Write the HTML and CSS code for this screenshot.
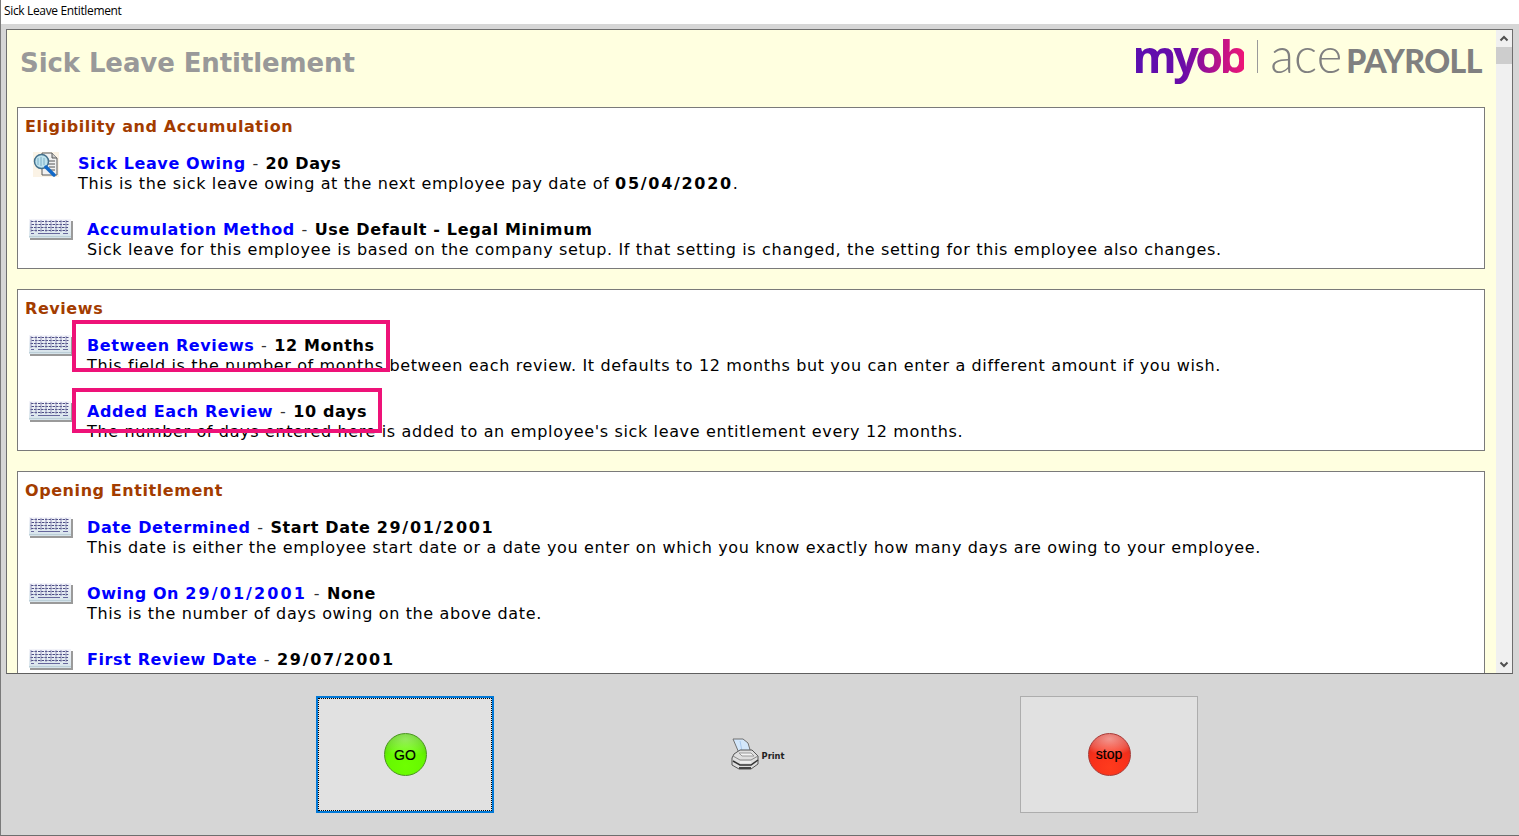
FILE: index.html
```html
<!DOCTYPE html>
<html lang="en">
<head>
<meta charset="utf-8">
<title>Sick Leave Entitlement</title>
<link rel="stylesheet" href="styles.css">
</head>
<body>
<svg class="defs" width="0" height="0" aria-hidden="true">
  <defs>
    <linearGradient id="kbBody" x1="0" y1="0" x2="0" y2="1">
      <stop offset="0" stop-color="#f4f4fa"/><stop offset="1" stop-color="#d5e3ea"/>
    </linearGradient>
    <symbol id="kb" viewBox="0 0 45 22">
      <path d="M2 3h43v19H2z" fill="#9a9a9a"/>
      <path d="M1 1h42v19H1z" fill="url(#kbBody)"/>
      <path d="M3 3.500h38M3.500 6.500h37M2.500 9.500h38M3 12.500h37" stroke="#4c4c84" stroke-width="1" stroke-dasharray="2.500 1" fill="none"/>
      <path d="M3 2v12M8 2v12M13 2v12M18 2v12M23 2v12M28 2v12M33 2v12M38 2v12" stroke="#7f7fab" stroke-width=".8" fill="none"/>
      <path d="M3 15.500h3M10 15.500h22M35 15.500h5" stroke="#66669c" stroke-width="1" fill="none"/>
      <path d="M1 18.500h42" stroke="#bccfd8" fill="none"/>
    </symbol>
  </defs>
</svg>
<div class="window">
  <header class="titlebar">Sick Leave Entitlement</header>
  <div class="stage">
    <div class="frame">
      <div class="main">
        <div class="pagehead">
          <h1 class="pagetitle">Sick Leave Entitlement</h1>
          <div class="logo">
            <span class="logo-myob">myob</span>
            <span class="logo-rule"></span>
            <span class="logo-ace">ace</span>
            <span class="logo-payroll">PAYROLL</span>
          </div>
        </div>
        <div class="scroller">
        <section class="panel">
          <h2 class="panel-title">Eligibility and Accumulation</h2>
          <div class="row row-doc">
            <svg class="icon-doc" viewBox="0 0 26 25" width="26" height="25">
              <rect width="26" height="25" fill="#fbf3e6"/>
              <path d="M9 1h10l5 5v17H9z" fill="#f1f1f1" stroke="#5a5a5a"/>
              <path d="M19 1v5h5" fill="#ccc" stroke="#5a5a5a"/>
              <path d="M14 9h8M15 12h7M16 15h6M17 18h5" stroke="#555"/>
              <circle cx="8.500" cy="9.500" r="7" fill="#bfe3ee" stroke="#44708c" stroke-width="1.500"/>
              <path d="M5 6v7M8 5v9M11 6v7" stroke="#7fb0c8"/>
              <path d="M13 15l8 8" stroke="#1168c8" stroke-width="3.500" stroke-linecap="round"/>
            </svg>
            <div class="row-text">
              <div class="row-head"><a class="link">Sick Leave Owing</a><span class="dash"> - </span><b class="value">20 Days</b></div>
              <div class="row-desc">This is the sick leave owing at the next employee pay date of <b class="value date">05/04/2020</b>.</div>
            </div>
          </div>
          <div class="row">
            <svg class="icon-kb"><use href="#kb"/></svg>
            <div class="row-text">
              <div class="row-head"><a class="link">Accumulation Method</a><span class="dash"> - </span><b class="value">Use Default - Legal Minimum</b></div>
              <div class="row-desc">Sick leave for this employee is based on the company setup. If that setting is changed, the setting for this employee also changes.</div>
            </div>
          </div>
        </section>

        <section class="panel">
          <h2 class="panel-title">Reviews</h2>
          <div class="row">
            <svg class="icon-kb"><use href="#kb"/></svg>
            <div class="row-text">
              <div class="row-head"><a class="link">Between Reviews</a><span class="dash"> - </span><b class="value">12 Months</b></div>
              <div class="row-desc">This field is the number of months between each review. It defaults to 12 months but you can enter a different amount if you wish.</div>
            </div>
            <span class="mark mark-a"></span>
          </div>
          <div class="row">
            <svg class="icon-kb"><use href="#kb"/></svg>
            <div class="row-text">
              <div class="row-head"><a class="link">Added Each Review</a><span class="dash"> - </span><b class="value">10 days</b></div>
              <div class="row-desc">The number of days entered here is added to an employee's sick leave entitlement every 12 months.</div>
            </div>
            <span class="mark mark-b"></span>
          </div>
        </section>

        <section class="panel">
          <h2 class="panel-title">Opening Entitlement</h2>
          <div class="row">
            <svg class="icon-kb"><use href="#kb"/></svg>
            <div class="row-text">
              <div class="row-head"><a class="link">Date Determined</a><span class="dash"> - </span><b class="value">Start Date <span class="date">29/01/2001</span></b></div>
              <div class="row-desc">This date is either the employee start date or a date you enter on which you know exactly how many days are owing to your employee.</div>
            </div>
          </div>
          <div class="row">
            <svg class="icon-kb"><use href="#kb"/></svg>
            <div class="row-text">
              <div class="row-head"><a class="link">Owing On <span class="date wide">29/01/2001</span></a><span class="dash"> - </span><b class="value">None</b></div>
              <div class="row-desc">This is the number of days owing on the above date.</div>
            </div>
          </div>
          <div class="row">
            <svg class="icon-kb"><use href="#kb"/></svg>
            <div class="row-text">
              <div class="row-head"><a class="link">First Review Date</a><span class="dash"> - </span><b class="value date">29/07/2001</b></div>
              <div class="row-desc">This field is the date on which the next review occurs. It is set from the start date of the employee but you can change it if you wish to.</div>
            </div>
          </div>
        </section>
        </div>
      </div>
      <div class="scrollbar">
        <svg class="arrow" viewBox="0 0 16 17" width="16" height="17"><path d="M4.500 10.500L8 7l3.500 3.500" fill="none" stroke="#505050" stroke-width="2"/></svg>
        <div class="thumb"></div>
        <div class="track"></div>
        <svg class="arrow" viewBox="0 0 16 17" width="16" height="17"><path d="M4.500 6.500L8 10l3.500-3.500" fill="none" stroke="#505050" stroke-width="2"/></svg>
      </div>
    </div>
    <footer class="actions">
      <button class="action action-go" type="button"><span class="inner"><span class="orb orb-go">GO</span></span></button>
      <div class="action action-print">
        <svg class="printer" viewBox="0 0 30 33" width="30" height="33">
          <path d="M3 1h10l5 4 3 10H9z" fill="#d3e7fb" stroke="#707070"/>
          <path d="M10 3l2 10" stroke="#a9c9ee"/>
          <path d="M4 16l6-4h12l6 6v8l-7 5H9l-7-4v-7z" fill="#dedede" stroke="#555"/>
          <path d="M3 18l7 4h11l7-4" fill="none" stroke="#888"/>
          <path d="M9 15h12l3 3H12z" fill="#f4f4f4" stroke="#999"/>
          <path d="M3 23l7 4h11l7-5" fill="none" stroke="#333" stroke-width="1.500"/>
          <path d="M10 24h11" stroke="#fff"/>
          <path d="M9 29h12v2H9z" fill="#444"/>
        </svg>
        <span class="print-label">Print</span>
      </div>
      <button class="action action-stop" type="button"><span class="orb orb-stop">stop</span></button>
    </footer>
  </div>
</div>
</body>
</html>
```
FILE: styles.css
```css
* { box-sizing: border-box; }
html, body { margin: 0; height: 100%; overflow: hidden; }
body { background: #d6d6d6; }
.defs { position: absolute; }

.window {
  height: 836px;
  display: flex;
  flex-direction: column;
  border-left: 1px solid #7a7a7a;
  border-bottom: 1px solid #6e6e6e;
}
.titlebar {
  height: 24px;
  padding: 3px 0 0 3px;
  background: #fff;
  font: 12px/15px "Open Sans", sans-serif;
  letter-spacing: -0.35px;
  color: #000;
}
.stage {
  flex: 1;
  display: flex;
  flex-direction: column;
  padding: 5px 6px 0 5px;
  min-height: 0;
  background: #d6d6d6;
}
.frame {
  height: 645px;
  flex: none;
  display: flex;
  border: 1px solid #6e6e6e;
  border-bottom-color: #5f5f5f;
  background: #ffffe0;
}
.main {
  flex: 1;
  min-width: 0;
  display: flex;
  flex-direction: column;
}
.scroller {
  flex: 1;
  min-height: 0;
  overflow: hidden;
  padding: 0 11px 0 10px;
  font: 16px/20px "DejaVu Sans", Verdana, sans-serif;
  letter-spacing: 0.64px;
  color: #000;
}
.pagehead {
  height: 77px;
  flex: none;
  display: flex;
  justify-content: space-between;
  padding: 17px 14px 0 13px;
}
.pagetitle {
  margin: 0;
  font: bold 26px/32px "DejaVu Sans", Verdana, sans-serif;
  letter-spacing: -0.1px;
  color: #999;
}
.logo {
  display: flex;
  align-items: baseline;
  margin-top: -13px;
  white-space: nowrap;
  height: 40px;
}
.logo-myob {
  font: 700 45px/40px "Open Sans", sans-serif;
  letter-spacing: -3.600px;
  background: linear-gradient(90deg, #5a0fb0 0%, #6a0ca8 45%, #ee1677 100%);
  -webkit-background-clip: text;
  background-clip: text;
  color: transparent;
  padding-bottom: 14px;
}
.logo-rule {
  width: 1px;
  height: 33px;
  margin: 6px 12px 0 13px;
  background: #9a9a9a;
  align-self: flex-start;
}
.logo-ace {
  font: 300 49px/40px Lato, sans-serif;
  color: #808080;
  margin-right: 4px;
}
.logo-payroll {
  font: 900 32px/40px Lato, sans-serif;
  letter-spacing: -0.5px;
  color: #808080;
}

.panel {
  margin-bottom: 20px;
  padding: 9px 7px 8px 7px;
  background: #fff;
  border: 1px solid #7a7a7a;
}
.panel-title {
  margin: 0 0 17px;
  font: bold 16px/20px "DejaVu Sans", Verdana, sans-serif;
  letter-spacing: 0.57px;
  color: #a33c00;
}
.row {
  position: relative;
  display: flex;
  align-items: flex-start;
  gap: 14px;
  padding-left: 3px;
  margin-bottom: 26px;
}
.row:last-child { margin-bottom: 0; }
.row-doc { gap: 19px; padding-left: 8px; }
.icon-kb { width: 45px; height: 22px; flex: none; margin-top: -2px; }
.icon-doc { flex: none; margin-top: -2px; }
.row-text { flex: 1; min-width: 0; white-space: nowrap; }
.row-head, .row-desc { height: 20px; }
.link { color: #00f; font-weight: bold; letter-spacing: 0.6px; }
.dash { color: #333; white-space: pre; padding: 0 1px; }
.value { font-weight: bold; color: #000; }
.date { letter-spacing: 1.7px; }
.wide { letter-spacing: 2.100px; }

.mark {
  position: absolute;
  left: 47px;
  border: 4px solid #ee1278;
  pointer-events: none;
}
.mark-a { top: -16px; width: 318px; height: 52px; }
.mark-b { top: -14px; width: 310px; height: 45px; }

.scrollbar {
  width: 16px;
  flex: none;
  display: flex;
  flex-direction: column;
  background: #f0f0f0;
}
.arrow { display: block; flex: none; }
.thumb { height: 17px; background: #cdcdcd; flex: none; }
.track { flex: 1; }

.actions {
  flex: 1;
  display: flex;
  align-items: center;
  gap: 176px;
  padding-left: 310px;
}
.action {
  width: 178px;
  height: 117px;
  flex: none;
  display: flex;
  align-items: center;
  justify-content: center;
  padding: 0;
  font-family: "Liberation Sans", Arial, sans-serif;
}
.action-go, .action-stop { background: #e1e1e1; color: #000; }
.action-go { border: 2px solid #0078d7; }
.action-stop { border: 1px solid #adadad; }
.inner {
  width: 100%;
  height: 100%;
  display: flex;
  align-items: center;
  justify-content: center;
  border: 1px dotted #000;
}
.action-print { width: 174px; gap: 2px; }
.printer { flex: none; }
.print-label {
  font: bold 8.300px/12px "DejaVu Sans", Verdana, sans-serif;
  color: #222;
  margin-top: 2px;
}
.orb {
  position: relative;
  width: 43px;
  height: 43px;
  border-radius: 50%;
  display: flex;
  align-items: center;
  justify-content: center;
  font: 14px/16px "Liberation Sans", Arial, sans-serif;
  -webkit-text-stroke: 0.15px #000;
  color: #000;
}
.orb-go {
  padding-top: 1px;
  background:
    radial-gradient(ellipse 70% 45% at 50% 12%, rgba(255,255,255,.35) 0%, rgba(255,255,255,.12) 70%, rgba(255,255,255,0) 100%),
    radial-gradient(circle at 50% 78%, #6eff00 0%, #66f800 50%, #55cc0a 85%, #4aa315 100%);
  border: 1px solid #4a9420;
}
.orb-stop {
  padding-bottom: 1px;
  background:
    radial-gradient(ellipse 70% 42% at 50% 12%, rgba(255,255,255,.5) 0%, rgba(255,255,255,.2) 70%, rgba(255,255,255,0) 100%),
    radial-gradient(circle at 50% 82%, #ff3b1d 0%, #f8301a 50%, #d92b20 85%, #b32a24 100%);
  border: 1px solid #a83a36;
}
```
